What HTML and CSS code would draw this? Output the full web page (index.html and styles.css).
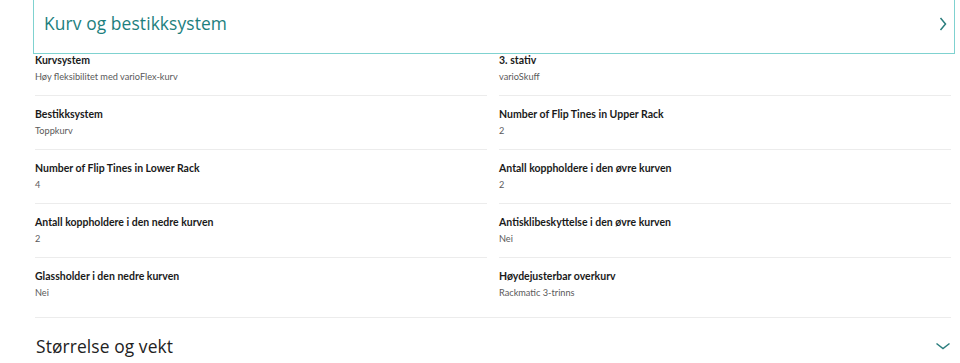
FILE: index.html
```html
<!DOCTYPE html>
<html lang="no">
<head>
<meta charset="utf-8">
<title>Kurv og bestikksystem</title>
<link rel="stylesheet" href="styles.css">
</head>
<body>
<section class="acc acc-open">
  <button class="acc-head acc-head-active" type="button">
    <span class="acc-title acc-title-active">Kurv og bestikksystem</span>
    <svg class="chev-right" width="8" height="14" viewBox="0 0 8 14" aria-hidden="true"><polyline points="1.5,1 6.5,7 1.5,13" fill="none" stroke="#2a7d7d" stroke-width="1.5"/></svg>
  </button>
  <dl class="specs">
    <div class="spec"><dt>Kurvsystem</dt><dd>Høy fleksibilitet med varioFlex-kurv</dd></div>
    <div class="spec"><dt>3. stativ</dt><dd>varioSkuff</dd></div>
    <div class="spec"><dt>Bestikksystem</dt><dd>Toppkurv</dd></div>
    <div class="spec"><dt>Number of Flip Tines in Upper Rack</dt><dd>2</dd></div>
    <div class="spec"><dt>Number of Flip Tines in Lower Rack</dt><dd>4</dd></div>
    <div class="spec"><dt>Antall koppholdere i den øvre kurven</dt><dd>2</dd></div>
    <div class="spec"><dt>Antall koppholdere i den nedre kurven</dt><dd>2</dd></div>
    <div class="spec"><dt>Antisklibeskyttelse i den øvre kurven</dt><dd>Nei</dd></div>
    <div class="spec"><dt>Glassholder i den nedre kurven</dt><dd>Nei</dd></div>
    <div class="spec"><dt>Høydejusterbar overkurv</dt><dd>Rackmatic 3-trinns</dd></div>
  </dl>
</section>
<section class="acc">
  <button class="acc-head acc-head-closed" type="button">
    <span class="acc-title">Størrelse og vekt</span>
    <svg class="chev-down" width="16" height="8" viewBox="0 0 16 8" aria-hidden="true"><polyline points="1.5,1.5 8,6.5 14.5,1.5" fill="none" stroke="#2a7d7d" stroke-width="1.5"/></svg>
  </button>
</section>
</body>
</html>
```

FILE: styles.css
```css
* { box-sizing: border-box; }

html, body {
  margin: 0;
  padding: 0;
  background: #ffffff;
}

body {
  font-family: "Open Sans", "Noto Sans", sans-serif;
  color: #1a1a1a;
  width: 960px;
  overflow: hidden;
}

.acc-head {
  display: flex;
  align-items: center;
  justify-content: space-between;
  width: 100%;
  background: transparent;
  border: 0;
  padding: 0;
  font: inherit;
  text-align: left;
  cursor: pointer;
}

.acc-head-active {
  margin: -1px 0 -12px 33px;
  width: 922px;
  height: 55px;
  border: 1px solid #7fd2d0;
  padding: 0 7px 5px 10px;
}

.acc-title {
  font-size: 17.4px;
  line-height: 24px;
  font-weight: 400;
  color: #222222;
  letter-spacing: 0.1px;
}

.acc-title-active {
  color: #1d7f7e;
  margin-top: -2px;
}

.chev-right { display: block; }

.specs {
  margin: 0 9px 0 35px;
  padding: 0 0 6px;
  display: grid;
  grid-template-columns: 1fr 1fr;
  column-gap: 12px;
  border-bottom: 1px solid #ececec;
  font-family: "Lato", "Open Sans", sans-serif;
}

.spec {
  padding: 10px 0 9px;
  border-bottom: 1px solid #ececec;
}

.spec:nth-last-child(-n+2) { border-bottom: 0; }

.spec dt {
  margin: 0;
  font-size: 10.5px;
  line-height: 16px;
  font-weight: 700;
  color: #1a1a1a;
}

.spec dd {
  margin: 1px 0 0;
  font-size: 9.2px;
  line-height: 16px;
  color: #5a5a5a;
  padding-bottom: 1px;
}

.acc-head-closed {
  height: 56px;
  padding: 0 9px 0 36px;
}

.chev-down { display: block; }
```
